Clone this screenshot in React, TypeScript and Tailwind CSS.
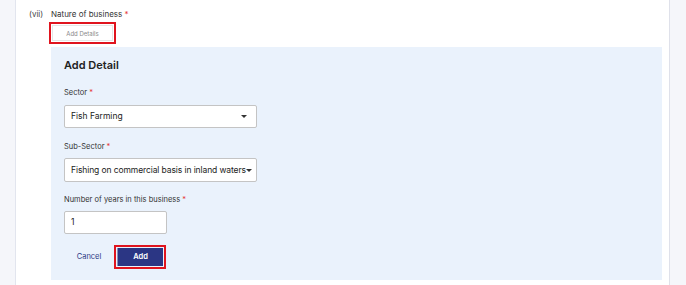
import React from 'react';

const font = { fontFamily: 'Inter, "Noto Sans", sans-serif' };

function Req() {
  return <span className="text-[#e53935]"> *</span>;
}

function Caret() {
  return (
    <svg width="6" height="3" viewBox="0 0 6 3" className="shrink-0">
      <path d="M0 0h6L3 3z" fill="#333" />
    </svg>
  );
}

export default function App() {
  return (
    <div className="w-[686px] h-[285px] flex bg-[#f5f6fa] text-[#333] overflow-hidden" style={font}>
      <div className="w-[16px] shrink-0 border-r border-[#e2e5ee]" />

      <div className="w-[653px] shrink-0 bg-white flex pl-[13px] pt-[9px]">
        <div className="w-[22px] text-[8px] leading-[10px] text-[#444]">(vii)</div>

        <div className="flex-1 flex flex-col">
          <div className="text-[8px] leading-[10px] text-[#333]">
            Nature of business<Req />
          </div>

          {/* Add Details */}
          <div className="mt-[3px] ml-[-2px] w-[67px] h-[22px] border-2 border-[#e0141e] p-[1px]">
            <button className="w-full h-full bg-white border border-[#e6e6e6] text-[6px] text-[#8a8a8a] flex items-center justify-center">
              Add Details
            </button>
          </div>

          {/* Panel */}
          <div className="mt-[3px] w-[611px] h-[233px] bg-[#eaf2fc] pl-[13px] pt-[12px] flex flex-col">
            <div className="text-[11px] leading-[12px] font-semibold text-[#222]">Add Detail</div>

            <div className="mt-[17px] text-[7.5px] leading-[9px] text-[#333]">
              Sector<Req />
            </div>
            <div className="mt-[8px] w-[193px] h-[23px] bg-white border border-[#c4c4c4] rounded-[2px] flex items-center justify-between pl-[6px] pr-[9px]">
              <span className="text-[8.5px] text-[#222]">Fish Farming</span>
              <Caret />
            </div>

            <div className="mt-[14px] text-[7.5px] leading-[9px] text-[#333]">
              Sub-Sector<Req />
            </div>
            <div className="mt-[7px] w-[193px] h-[24px] bg-white border border-[#c4c4c4] rounded-[2px] flex items-center pl-[6px] pr-[4px]">
              <span className="text-[8.5px] text-[#222] whitespace-nowrap tracking-[-0.1px]">
                Fishing on commercial basis in inland waters
              </span>
              <Caret />
            </div>

            <div className="mt-[13px] text-[7.5px] leading-[9px] text-[#333]">
              Number of years in this business<Req />
            </div>
            <div className="mt-[7px] w-[103px] h-[23px] bg-white border border-[#c4c4c4] rounded-[2px] flex items-center pl-[6px]">
              <span className="text-[8.5px] text-[#222]">1</span>
            </div>

            <div className="mt-[11px] flex items-center">
              <button className="w-[50px] text-[7.5px] text-[#2c3a84] text-center">Cancel</button>
              <div className="w-[52px] h-[24px] border-2 border-[#e0141e] p-[1px]">
                <button className="w-full h-full bg-[#2b3684] border-l border-[#8a90b8] text-white text-[7.5px] font-semibold flex items-center justify-center">
                  Add
                </button>
              </div>
            </div>
          </div>
        </div>
      </div>

      <div className="flex-1 border-l border-[#dfe1ea]" />
    </div>
  );
}
